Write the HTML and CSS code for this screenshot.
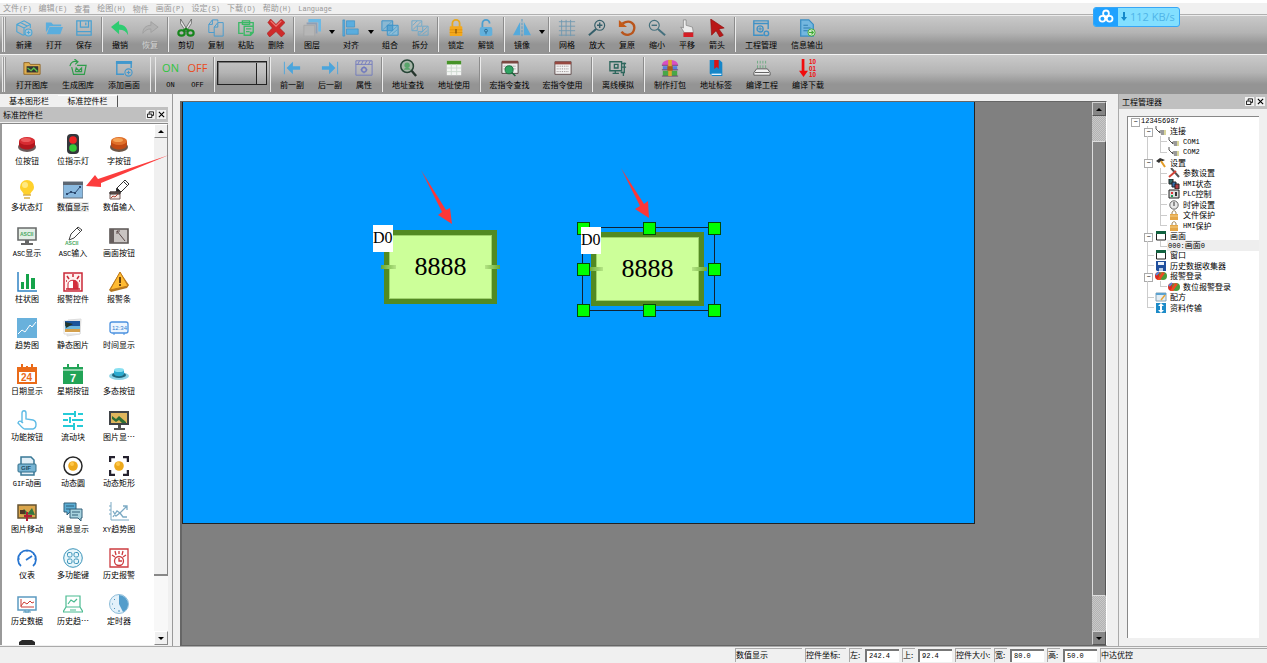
FILE: index.html
```html
<!DOCTYPE html>
<html lang="zh-CN">
<head>
<meta charset="utf-8">
<title>123456987</title>
<link rel="stylesheet" href="styles.css">
</head>
<body>
<nav class="menubar">
  <a href="#">文件<span class="latin">(F)</span></a><a href="#">编辑<span class="latin">(E)</span></a><a href="#">查看</a><a href="#">绘图<span class="latin">(H)</span></a><a href="#">物件</a><a href="#">画面<span class="latin">(P)</span></a><a href="#">设定<span class="latin">(S)</span></a><a href="#">下载<span class="latin">(D)</span></a><a href="#">帮助<span class="latin">(H)</span></a><a href="#"><span class="latin">Language</span></a>
</nav>

<div class="toolbar">
  <span class="grip"></span>
  <button class="tool"><svg viewBox="0 0 20 20" fill="none" stroke="#4aa6d6" stroke-width="1.2"><path d="M12 17l-3 1-7-4V6l8-4 7 4v4M2 6l8 4 7-4M10 10v8M6 4l8 4"/><circle cx="15" cy="15" r="3.800" fill="#a9c4d4"/><path d="M13 15h4M15 13v4"/></svg>新建</button>
  <button class="tool"><svg viewBox="0 0 20 20" fill="#5aaede"><path d="M1 4h6l2 2h9v2H5L2 14H1z"/><path d="M5 9h15l-3 8H2z"/></svg>打开</button>
  <button class="tool"><svg viewBox="0 0 20 20" fill="none" stroke="#4aa0d0" stroke-width="1.4"><path d="M2 2h16v16H2zM6 2v7h9V2M12 4v3M2 14h16"/></svg>保存</button>
  <span class="sep"></span>
  <button class="tool"><svg viewBox="0 0 20 20" fill="#2ecc71"><path d="M0 9l9-7v4c6 0 10 4 10 12-2-4-5-6-10-6v5z"/></svg>撤销</button>
  <button class="tool off" disabled><svg viewBox="0 0 20 20" fill="#b2b2b2" stroke="#9f9f9f"><path d="M19 9l-8-6v4C5 7 2 11 2 16c2-3 5-5 9-5v4z"/></svg>恢复</button>
  <span class="sep"></span>
  <button class="tool"><svg viewBox="0 0 20 20"><path d="M4 0l8 13-2 1L4 5zM16 0L8 13l2 1 6-9z" fill="#e4e4e4" stroke="#444" stroke-width=".7"/><g fill="none" stroke="#16851c" stroke-width="2.4"><ellipse cx="5" cy="15.500" rx="3.500" ry="3"/><ellipse cx="15" cy="15.500" rx="3.500" ry="3"/><path d="M7 13l3-2 3 2"/></g></svg>剪切</button>
  <button class="tool"><svg viewBox="0 0 20 20" fill="none" stroke="#4a9cce" stroke-width="1.1"><path d="M8 15H2V6l4-5h6v2M2 6h4V1"/><path d="M8 9l4-5h6v15H8zM8 9h4V4"/></svg>复制</button>
  <button class="tool"><svg viewBox="0 0 20 20" fill="none" stroke="#3cb866" stroke-width="1.5"><path d="M7 16H2V4h16v4M6 2h8v4H6zM8 8h10v7l-3 3H8zM10 11h6M10 14h4M15 18v-3h3"/></svg>粘贴</button>
  <button class="tool"><svg viewBox="0 0 20 20"><path d="M1 4l3-4 6 6 6-6 4 4-6 6 6 6-4 4-6-6-7 6-3-4 6-6z" fill="#cf2b2b" stroke="#a01818" stroke-width=".6"/><path d="M4 2l6 6 6-6" fill="none" stroke="#ee7b76" stroke-width="1.2"/></svg>删除</button>
  <span class="sep"></span>
  <button class="tool"><svg viewBox="0 0 20 20"><path d="M6 0h14v14h-3V4H6z" fill="#6db9e4"/><path d="M4 4h12v2H4zM14 6h2v10h-2z" fill="#8f9fb5"/><path d="M1 7h12v12H1z" fill="#b6b6b6" stroke="#a6a6a6"/></svg>图层</button><button class="drop" aria-label="图层选项"></button>
  <button class="tool"><svg viewBox="0 0 20 20" fill="#5badde" stroke="#3f91c4" stroke-width=".8"><path d="M1 1h2v18H1zM5 2h9v7H5zM5 11h13v6H5z"/></svg>对齐</button><button class="drop" aria-label="对齐选项"></button>
  <button class="tool"><svg viewBox="0 0 20 20" stroke="#3f94c8" stroke-width="1.1"><path d="M1 2h12v11H1z" fill="#8ab8d2"/><path d="M7 7h12v11H7z" fill="#8cbcd6"/><path d="M7 7h6v6H7z" fill="#5aa4d0"/><path d="M2 12L12 3M8 17L18 8M12 17l6-5" fill="none" stroke-width=".7"/></svg>组合</button>
  <button class="tool"><svg viewBox="0 0 20 20" stroke="#5fa6ce" stroke-width=".9" fill="none"><path d="M1 2h11v6H7v5H1zM13 8h6v10H8v-4h5zM2 7l5-5M2 12l9-9M9 17l9-8M13 17l5-4"/></svg>拆分</button>
  <span class="sep"></span>
  <button class="tool"><svg viewBox="0 0 20 20"><path d="M6 9V5a4 4 0 018 0v4" fill="none" stroke="#e8a81c" stroke-width="2"/><rect x="3" y="8" width="14" height="11" rx="1" fill="#f3a81b"/><path d="M3 12h14M3 15h14" stroke="#e0920c"/><path d="M10 11v5" stroke="#855306" stroke-width="1.500"/></svg>锁定</button>
  <button class="tool"><svg viewBox="0 0 20 20"><path d="M6 9V5a4 4 0 018 0" fill="none" stroke="#4b9fd0" stroke-width="2"/><rect x="3" y="9" width="14" height="10" rx="2" fill="#62b0dc"/><circle cx="10" cy="13" r="1.600" fill="none" stroke="#29688e"/><path d="M10 14v3" stroke="#29688e"/></svg>解锁</button>
  <span class="sep"></span>
  <button class="tool"><svg viewBox="0 0 20 20" fill="#54aadc"><path d="M8 3v15H0zM12 3v15h8z"/><path d="M10 0v20" stroke="#4694c4" stroke-dasharray="3 1"/></svg>镜像</button><button class="drop" aria-label="镜像选项"></button>
  <span class="sep"></span>
  <button class="tool"><svg viewBox="0 0 20 20" fill="none" stroke="#7099b0"><path d="M1 3h18M1 8h18M1 13h18M1 18h18M4 1v18M9 1v18M14 1v18"/></svg>网格</button>
  <button class="tool"><svg viewBox="0 0 20 20" fill="none" stroke="#355f6a"><circle cx="13" cy="7" r="5.500" stroke-width="1.300"/><path d="M10 7h6M13 4v6" stroke-width="1.600"/><path d="M9 11l-8 7" stroke-width="2.200"/></svg>放大</button>
  <button class="tool"><svg viewBox="0 0 20 20"><path d="M5 5c8-5 14 0 13 6-1 7-10 9-14 3" fill="none" stroke="#b9551c" stroke-width="2.600"/><path d="M1 1v8h9z" fill="#c45a18"/></svg>复原</button>
  <button class="tool"><svg viewBox="0 0 20 20" fill="none" stroke="#45707d"><circle cx="7" cy="7" r="5.500" stroke-width="1.300"/><path d="M4 7h6" stroke-width="1.600"/><path d="M11 11l8 7" stroke-width="2.200"/></svg>缩小</button>
  <button class="tool"><svg viewBox="0 0 20 20"><path d="M6 1h3v6l7 2 1 6H7L3 9l3 1z" fill="#ececec" stroke="#777" stroke-width=".7"/><path d="M6 15h11v5H6z" fill="#d51e26"/></svg>平移</button>
  <button class="tool"><svg viewBox="0 0 20 20"><path d="M3 0l15 10-6 1 5 7-4 2-4-7-5 5z" fill="#b91818" stroke="#8d0d0d" stroke-width=".7"/></svg>箭头</button>
  <span class="sep"></span>
  <button class="tool wide"><svg viewBox="0 0 20 20" fill="none" stroke="#3e91c6" stroke-width="1.500"><path d="M13 18H2V2h16v9M2 5h16"/><circle cx="9" cy="11" r="3.400"/><path d="M9 9v4M7 11h4" stroke-width="1"/><circle cx="16" cy="16" r="2.500"/></svg>工程管理</button>
  <button class="tool wide"><svg viewBox="0 0 20 20"><path d="M3 1h9l5 5v13H3z" fill="#73b7df" stroke="#398dc3" stroke-width="1.400"/><path d="M6 7h5M6 10h8M6 13h5" stroke="#2f7fb2" stroke-width="1.200"/><circle cx="15" cy="15" r="4" fill="#cfe8c5" stroke="#3faa34"/><path d="M12 15h5M15 13l2 2-2 2" fill="none" stroke="#3faa34" stroke-width="1.200"/></svg>信息输出</button>
</div>

<div class="toolbar">
  <span class="grip"></span>
  <button class="tool wide"><svg viewBox="0 0 20 20"><path d="M1 4h6l1 2h11v11H1z" fill="#e0b052" stroke="#8d6424"/><path d="M4 8h13v7H4z" fill="#333"/><path d="M5 10l4 3 3-3 4 4" fill="none" stroke="#5ec64b" stroke-width="1.500"/></svg>打开图库</button>
  <button class="tool wide"><svg viewBox="0 0 20 20" fill="none" stroke="#2f9d4b" stroke-width="1.300"><path d="M9 7h10l-2 10H5L3 9M1 8c1-5 4-6 8-5M6 0l4 3-3 3M7 14l1-4 3 3 3-3v4H7"/></svg>生成图库</button>
  <button class="tool wide"><svg viewBox="0 0 20 20" fill="none" stroke="#4298cd" stroke-width="1.600"><path d="M10 17H2V3h16v7"/><path d="M1 4h18" stroke-width="3"/><circle cx="15" cy="15" r="4" stroke-width="1.200"/><path d="M13 15h4M15 13v4" stroke-width="1.200"/></svg>添加画面</button>
  <span class="grip double"></span>
  <button class="tool power"><b class="on">ON</b><span class="latin">ON</span></button>
  <button class="tool power"><b class="offtext">OFF</b><span class="latin">OFF</span></button>
  <span class="sep"></span>
  <select class="state" aria-label="状态"><option></option></select>
  <span class="sep"></span>
  <button class="tool mid"><svg viewBox="0 0 20 20" fill="#4ba5dc"><path d="M1 3h1v14H1zM4 10l7-7v5h8v4h-8v5z"/></svg>前一副</button>
  <button class="tool mid"><svg viewBox="0 0 20 20" fill="#4ba5dc"><path d="M18 3h1v14h-1zM16 10L9 3v5H1v4h8v5z"/></svg>后一副</button>
  <button class="tool"><svg viewBox="0 0 20 20" fill="none" stroke="#7079bd"><path d="M1 2h18v16H1zM1 6h18M5 2L3 6M9 2L7 6M13 2l-2 4M17 2l-2 4"/><circle cx="10" cy="12" r="2.600" stroke-width="1.500"/><path d="M10 8v2M10 14v2M6 12h2M12 12h2"/></svg>属性</button>
  <span class="sep"></span>
  <button class="tool wide"><svg viewBox="0 0 20 20"><circle cx="9" cy="8" r="7" fill="#a7b6a9" stroke="#264536" stroke-width="1.700"/><circle cx="9" cy="7" r="3" fill="#58a46a"/><path d="M5 12c1-3 7-3 8 0" fill="#58a46a"/><path d="M14 13l5 6" stroke="#26352d" stroke-width="2.600"/></svg>地址查找</button>
  <button class="tool wide"><svg viewBox="0 0 20 20"><path d="M2 2h16v16H2z" fill="#f3f5f3"/><path d="M2 2h16v4H2z" fill="#459327"/><path d="M2 10h16M2 14h16M7 6v12M13 6v12" stroke="#ccd8ce"/></svg>地址使用</button>
  <span class="sep"></span>
  <button class="tool macro"><svg viewBox="0 0 20 20"><path d="M1 3h18v13H1z" fill="#eee" stroke="#4e4141"/><path d="M1 2h18v3H1z" fill="#7b4741"/><path d="M3 8h14M3 11h14" stroke="#756b6b" stroke-dasharray="1 1"/><circle cx="9" cy="12" r="4.500" fill="#2ea463" stroke="#176b3b"/><path d="M12 15l4 4" stroke="#17653a" stroke-width="1.600"/></svg>宏指令查找</button>
  <button class="tool macro"><svg viewBox="0 0 20 20"><path d="M1 3h18v14H1z" fill="#f4f4f4" stroke="#5b4646"/><path d="M1 3h18v3H1z" fill="#974840"/><path d="M3 8h14M3 11h14M3 14h14" stroke="#847b7b" stroke-dasharray="1 1"/></svg>宏指令使用</button>
  <span class="sep"></span>
  <button class="tool wide"><svg viewBox="0 0 20 20" fill="none" stroke="#2d665c" stroke-width="1.500"><path d="M1 3h13v10H1zM7 13v3M4 16h7M6 6h4v4H6zM14 5h5M14 9h5M17 4v11h-4M16 15v4"/></svg>离线模拟</button>
  <span class="sep"></span>
  <button class="tool wide"><svg viewBox="0 0 20 20"><path d="M1 7c0-8 18-8 18 0z" fill="#d94fc0"/><path d="M2 8h16v4H2z" fill="#547fe0"/><path d="M2 13h16v6H2z" fill="#48a747"/><path d="M1 7h18M1 12h18M1 19h18" stroke="#6e4570"/><path d="M8 1h4v18H8z" fill="#dba82c"/><path d="M7 8h6v5H7z" fill="#a85d16"/></svg>制作打包</button>
  <button class="tool wide"><svg viewBox="0 0 20 20"><path d="M3 1h11l3 3v15H6l-3-3z" fill="#1686c8"/><path d="M5 17h11" stroke="#e4f3ff" stroke-width="1.500"/><path d="M8 1h5v10l-2-2-3 2z" fill="#d81515"/></svg>地址标签</button>
  <button class="tool wide"><svg viewBox="0 0 20 20"><path d="M5 2v3M8 2v3M11 2v3M14 2v3M5 7v3M8 7v3M11 7v3M14 7v3" stroke="#6aaa7f"/><path d="M4 11h12l3 4v3H1v-3z" fill="#f3f3f3" stroke="#555"/><path d="M2 15h16" stroke="#555"/></svg>编译工程</button>
  <button class="tool wide"><svg viewBox="0 0 20 20" fill="#f00c0c"><path d="M3 0h3v13h4l-5 7-5-7h3z"/><text x="11" y="6" class="bits">10</text><text x="11" y="13" class="bits">01</text><text x="11" y="20" class="bits">10</text></svg>编译下载</button>
</div>

<main class="workspace">
  <aside class="dock">
    <div class="tabs"><button class="tab">基本图形栏</button><button class="tab active">标准控件栏</button></div>
    <div class="dockhead"><h2>标准控件栏</h2><button aria-label="浮动"><svg viewBox="0 0 8 8"><path d="M2.500 3V1h5v4h-2M.500 3.500h5v4h-5z" fill="none" stroke="#000"/></svg></button><button aria-label="关闭"><svg viewBox="0 0 8 8"><path d="M1 1l6 6M7 1L1 7" stroke="#000" stroke-width="1.300"/></svg></button></div>
    <div class="palette">
      <ul class="widgets">
        <li><svg viewBox="0 0 20 20"><ellipse cx="10" cy="13" rx="9" ry="5" fill="#6a5a5a"/><path d="M2 7v4c1 6 15 6 16 0V7z" fill="#b3161d"/><ellipse cx="10" cy="7" rx="8" ry="4" fill="#d82c32"/><ellipse cx="9" cy="6" rx="5" ry="2" fill="#ec5a5c"/></svg>位按钮</li>
        <li><svg viewBox="0 0 20 20"><rect x="4" y="0" width="12" height="20" rx="4" fill="#34373c"/><circle cx="10" cy="6" r="3.800" fill="#ef2424"/><circle cx="10" cy="14" r="3.800" fill="#35c737"/></svg>位指示灯</li>
        <li><svg viewBox="0 0 20 20"><ellipse cx="10" cy="13" rx="9" ry="5" fill="#6d5646"/><path d="M2 7v4c1 6 15 6 16 0V7z" fill="#c14a13"/><ellipse cx="10" cy="7" rx="8" ry="4" fill="#e0702a"/><ellipse cx="9" cy="6" rx="5" ry="2" fill="#f5a356"/></svg>字按钮</li>
        <li><svg viewBox="0 0 20 20"><path d="M3 7a7 7 0 0114 0c0 4-3 4-4 8H7C6 11 3 11 3 7z" fill="#ffd12c"/><circle cx="8" cy="5" r="3" fill="#ffe982"/><path d="M6 15h8M7 18h6" stroke="#d9b04c" stroke-width="1.600"/></svg>多状态灯</li>
        <li class="picked"><svg viewBox="0 0 20 20"><path d="M0 2h20v16H0z" fill="#8ab9df" stroke="#66717c"/><path d="M0 2h20v3H0z" fill="#5d6773"/><path d="M4 14l4-2 4 1 5-6" fill="none" stroke="#2c4970"/><path d="M3 13h2v2H3zM7 11h2v2H7zM11 12h2v2h-2zM16 6h2v2h-2z" fill="#2c4970"/></svg><span>数值显示</span></li>
        <li><svg viewBox="0 0 20 20" fill="none" stroke="#333"><path d="M7 13l1-5 8-8 4 4-8 8zM15 2l3 3"/><path d="M7 13l1-5 4 4z" fill="#222"/><path d="M1 12h10v7H1z" fill="#f4e9e5" stroke="#765d58"/><path d="M1 12h10v2H1z" fill="#765d58"/><path d="M2 18l2-2 2 1 3-3" stroke="#b34838"/></svg>数值输入</li>
        <li><svg viewBox="0 0 20 20"><path d="M1 2h18v12H1z" fill="#e4eee6" stroke="#686b6b" stroke-width="1.600"/><path d="M8 14h4v3H8zM4 17h12v2H4z" fill="#666"/><text x="3" y="10" class="ascii">ASCII</text></svg><span><span class="latin">ASC</span>显示</span></li>
        <li><svg viewBox="0 0 20 20"><path d="M6 14l2-6 7-7 4 3-8 8zM14 2l3 3" fill="none" stroke="#444"/><text x="2" y="19" class="ascii">ASCII</text></svg><span><span class="latin">ASC</span>输入</span></li>
        <li><svg viewBox="0 0 20 20"><path d="M1 3h18v14H1z" fill="#c9c4c2" stroke="#5b5554" stroke-width="1.600"/><path d="M1 3h4v14H1z" fill="#665e5d"/><path d="M8 5l8 10M8 5v3M8 5h3" stroke="#5a4949" fill="none"/></svg>画面按钮</li>
        <li><svg viewBox="0 0 20 20"><path d="M1 0v19h19" fill="none" stroke="#3182c4" stroke-width="1.500"/><path d="M4 10h3v7H4zM9 2h3v15H9zM14 6h4v11h-4z" fill="#15a34a"/></svg>柱状图</li>
        <li><svg viewBox="0 0 20 20"><path d="M1 1h18v18H1z" fill="#fff1ef" stroke="#ca2838" stroke-width="1.500"/><path d="M5 17v-5c0-5 10-5 10 0v5z" fill="#fff" stroke="#ca2838"/><path d="M10 8c4 0 5 2 5 9h-5z" fill="#d32e3c"/><path d="M10 2v3M4 4l2 3M16 4l-2 3M3 9h1M16 9h1M3 17h14" stroke="#ca2838" stroke-width="1.500"/></svg>报警控件</li>
        <li><svg viewBox="0 0 20 20"><path d="M11 0l9 13-2 3-16 4-2-2z" fill="#b5771f"/><path d="M11 0l8 14-18 4z" fill="#ffbb32" stroke="#c17a1a"/><path d="M11 5v6M11 12v2" stroke="#54300b" stroke-width="1.700"/></svg>报警条</li>
        <li><svg viewBox="0 0 20 20"><path d="M0 0h20v20H0z" fill="#69b1dc"/><path d="M1 16l4-4 3 2 5-7 2 2 4-5" fill="none" stroke="#fff"/></svg>趋势图</li>
        <li><svg viewBox="0 0 20 20"><path d="M5 2l13-1-1 15-13 2z" fill="#eee" stroke="#ddd"/><path d="M1 3h16v13H1z" fill="#fff" stroke="#ddd"/><path d="M2 3h15v5H2z" fill="#1c549b"/><path d="M2 8h15v3H2z" fill="#6db6dc"/><path d="M2 11h15v3H2z" fill="#d4a04c"/><path d="M2 4l8 2-7 4z" fill="#243529"/></svg>静态图片</li>
        <li><svg viewBox="0 0 20 20"><rect x="1" y="4" width="18" height="11" rx="2" fill="#edf6ff" stroke="#4b91df" stroke-width="1.300"/><text x="3" y="12" class="clock">12:34</text><path d="M4 16h2M14 16h2" stroke="#4b91df"/></svg>时间显示</li>
        <li><svg viewBox="0 0 20 20"><path d="M1 4h18v15H1z" fill="#fff" stroke="#ea6b19" stroke-width="2"/><path d="M1 4h18v4H1z" fill="#ea6b19"/><path d="M5 0v5M15 0v5M10 2v4" stroke="#ea6b19" stroke-width="2"/><text x="4" y="17" class="date">24</text></svg>日期显示</li>
        <li><svg viewBox="0 0 20 20"><path d="M0 3h20v17H0z" fill="#22a457"/><path d="M5 0v5M15 0v5" stroke="#22a457" stroke-width="2"/><path d="M0 6h20" stroke="#fff"/><text x="7" y="18" class="week">7</text></svg>星期按钮</li>
        <li><svg viewBox="0 0 20 20"><ellipse cx="10" cy="12" rx="10" ry="4" fill="#8fd3e6"/><ellipse cx="10" cy="11" rx="7" ry="3" fill="#20677d"/><path d="M5 6v4c1 3 9 3 10 0V6z" fill="#2cabd0"/><ellipse cx="10" cy="6" rx="5" ry="2" fill="#88e0f1"/></svg>多态按钮</li>
        <li><svg viewBox="0 0 20 20" fill="none" stroke="#5ebbe5" stroke-width="1.400"><path d="M5 13V3c0-3 4-3 4 0v6l7 1c4 1 4 8 0 9H8c-2 0-4-3-7-6 1-3 3-2 5 0"/></svg>功能按钮</li>
        <li><svg viewBox="0 0 20 20" fill="none" stroke="#26cbd7" stroke-width="2"><path d="M0 4h11M15 4h5M12 1v6M0 10h5M9 10h11M7 7v6M0 16h10M14 16h6M11 13v7"/></svg>流动块</li>
        <li><svg viewBox="0 0 20 20"><path d="M1 2h18v12H1z" fill="#dfb65d" stroke="#404448" stroke-width="2"/><path d="M3 6l4 3 3-3 7 6v1h-4l-3-3-3 2-4-3z" fill="#2e6e35"/><path d="M9 15h3v3H9zM5 18h11v2H5z" fill="#555"/></svg>图片显…</li>
        <li><svg viewBox="0 0 20 20"><path d="M4 8V1h10l3 3v4M4 14v5h13v-5" fill="#e2eff7" stroke="#397896" stroke-width="1.500"/><rect x="1" y="8" width="18" height="8" rx="1" fill="#77b4d3" stroke="#336e8b"/><text x="4" y="14" class="gif">GIF</text></svg><span><span class="latin">GIF</span>动画</span></li>
        <li><svg viewBox="0 0 20 20"><circle cx="10" cy="10" r="9" fill="#fff" stroke="#292929" stroke-width="1.500"/><circle cx="10" cy="10" r="4.800" fill="#eda91c"/><circle cx="9" cy="8" r="2" fill="#ffc84a"/></svg>动态圆</li>
        <li><svg viewBox="0 0 20 20"><path d="M1 6V1h5M14 1h5v5M19 14v5h-5M6 19H1v-5" fill="none" stroke="#24212e" stroke-width="2.500"/><circle cx="10" cy="10" r="4.800" fill="#eda91c"/><circle cx="9" cy="8" r="2" fill="#ffc84a"/></svg>动态矩形</li>
        <li><svg viewBox="0 0 20 20"><path d="M1 3h18v13H1z" fill="#dba64b" stroke="#665331" stroke-width="1.500"/><path d="M3 12l4-5 4 4 4-5 3 7z" fill="#337640"/><path d="M10 10v9M7 14h8" stroke="#b51d35" stroke-width="2"/><path d="M3 8h5v4H3z" fill="#503722"/></svg>图片移动</li>
        <li><svg viewBox="0 0 20 20" stroke="#315f79"><path d="M1 1h12v9H7l-3 3v-3H1z" fill="#5caed5"/><path d="M7 7h12v9h-1v3l-3-3H7z" fill="#a8d3df"/><path d="M3 4h8M3 7h4M9 10h8M9 13h6"/></svg>消息显示</li>
        <li><svg viewBox="0 0 20 20" fill="none" stroke="#7caac4"><path d="M2 0v18h18M0 4h2M0 8h2M0 12h2"/><path d="M4 15l4-6 3 2 7-7M14 4h4v4M4 9l3 5 4-3 3 4h4" stroke-width="1.300"/></svg><span><span class="latin">XY</span>趋势图</span></li>
        <li><svg viewBox="0 0 20 20" fill="none" stroke="#2775d0" stroke-width="1.700"><path d="M4 18a9 9 0 1112 0M9 12l6-4"/><path d="M10 2v2M3 6l1 1M17 6l-1 1M1 11h2M17 11h2" stroke-width="1"/></svg>仪表</li>
        <li><svg viewBox="0 0 20 20" fill="#e7f6fb" stroke="#3c94b9"><circle cx="10" cy="10" r="9.300"/><rect x="4.500" y="4.500" width="4.500" height="4.500" rx="1.500"/><rect x="11" y="4.500" width="4.500" height="4.500" rx="1.500"/><rect x="4.500" y="11" width="4.500" height="4.500" rx="1.500"/><rect x="11" y="11" width="4.500" height="4.500" rx="1.500"/></svg>多功能键</li>
        <li><svg viewBox="0 0 20 20" fill="none" stroke="#cd3c40" stroke-width="1.300"><path d="M1 1h18v18H1z"/><circle cx="10" cy="13" r="4.500"/><path d="M10 10v3h3M10 3v3M6 3l1 4M14 3l-1 4M3 7l3 2M17 7l-3 2"/></svg>历史报警</li>
        <li><svg viewBox="0 0 20 20"><path d="M1 3h18v13H1z" fill="#fff" stroke="#5c9bc1" stroke-width="1.500"/><path d="M4 5v8h13M4 12l3-4 3 2 3-3 2 2 2-1" fill="none" stroke="#cb3d36"/><path d="M8 16v2h4v-2M6 18h8" stroke="#599bbd" fill="none"/></svg>历史数据</li>
        <li><svg viewBox="0 0 20 20" fill="none" stroke="#4bbb91" stroke-width="1.200"><path d="M3 2h14v11H3zM3 13l-3 5h20l-3-5M5 10l3-4 3 2 3-3M7 16h6"/></svg>历史趋…</li>
        <li><svg viewBox="0 0 20 20"><circle cx="10" cy="10" r="9.500" fill="#e2f1fa" stroke="#8dbcd9"/><path d="M10 10V1a9 9 0 019 9c0 5-3 7-5 8z" fill="#539dcb"/><path d="M3 10h1M10 18v-2M5 5l1 1M5 15l1-1" stroke="#4f93ba"/></svg>定时器</li>
        <li><svg viewBox="0 0 20 20"><path d="M2 4V2l3-2h10l3 2v18H2z" fill="#292929"/></svg></li>
      </ul>
      <div class="scroll light"><button class="up" aria-label="向上"></button><div class="thumb"></div><div class="track"></div><button class="down" aria-label="向下"></button></div>
      <svg class="pointer" viewBox="0 0 83 33"><path d="M0 31L9 20L12 24L83 0L15 28L15 32Z" fill="#fc3d3d"/></svg>
    </div>
  </aside>

  <section class="stage">
    <div class="screen">
      <svg class="arrow first" viewBox="0 0 31 55"><path d="M0 0L25 40L29 38L31 54L17 45L21 42Z" fill="#fc3737"/></svg>
      <svg class="arrow second" viewBox="0 0 31 55"><path d="M0 0L23 36L27 33L28 50L14 41L19 38Z" fill="#fc3737"/></svg>
      <div class="display one"><i></i><span>8888</span><i></i></div><b class="tag tagone">D0</b>
      <div class="display two"><i></i><span>8888</span><i></i></div>
      <div class="selection"><i></i><i></i><i></i><i></i><i></i><i></i><i></i><i></i></div><b class="tag tagtwo">D0</b>
    </div>
    <div class="scroll dark"><button class="up" aria-label="向上"></button><div class="track"></div><div class="thumb"></div><div class="track low"></div><button class="down" aria-label="向下"></button></div>
  </section>

  <aside class="project">
    <div class="dockhead"><h2>工程管理器</h2><button aria-label="浮动"><svg viewBox="0 0 8 8"><path d="M2.500 3V1h5v4h-2M.500 3.500h5v4h-5z" fill="none" stroke="#000"/></svg></button><button aria-label="关闭"><svg viewBox="0 0 8 8"><path d="M1 1l6 6M7 1L1 7" stroke="#000" stroke-width="1.300"/></svg></button></div>
    <svg class="defs" aria-hidden="true">
      <symbol id="plug" viewBox="0 0 12 10"><path d="M1 0v3l4 4M4 5l4 3" fill="none" stroke="#555"/><path d="M5 4h4v5H6z" fill="#999"/><path d="M9 4h2v5H9z" fill="#d9d69a"/></symbol>
      <symbol id="lock" viewBox="0 0 12 10"><path d="M4 5V3c0-3 4-3 4 0v2" fill="none" stroke="#9b8558"/><path d="M2 4h8v6H2z" fill="#e4a646"/><path d="M2 6h8" stroke="#f4cf87"/></symbol>
      <symbol id="win" viewBox="0 0 12 10"><path d="M1.500 1h9v8h-9z" fill="#fff" stroke="#222"/><path d="M1 0h10v3H1z" fill="#126341"/></symbol>
      <symbol id="alarm" viewBox="0 0 12 10"><ellipse cx="4" cy="5" rx="4" ry="4" fill="#d92b22"/><ellipse cx="8" cy="5" rx="4" ry="4" fill="#4a9c3a"/><path d="M2 9l5-8 3 1-5 7z" fill="#ed4b22"/><path d="M1 4l3-3" stroke="#548dde" stroke-width="2"/></symbol>
    </svg>
    <ul class="tree">
      <li><i class="box"></i><span class="latin">123456987</span></li>
      <li><i></i><i class="box v"></i><svg><use href="#plug"/></svg>连接</li>
      <li><i></i><i class="v"></i><i class="v h"></i><svg><use href="#plug"/></svg><span class="latin">COM1</span></li>
      <li><i></i><i class="v"></i><i class="v h end"></i><svg><use href="#plug"/></svg><span class="latin">COM2</span></li>
      <li><i></i><i class="box v"></i><svg viewBox="0 0 12 10"><path d="M1 3l4-3 5 2-2 1-2 0-2 2z" fill="#333"/><path d="M6 3l4 6" stroke="#e39c26" stroke-width="2"/></svg>设置</li>
      <li><i></i><i class="v"></i><i class="v h"></i><svg viewBox="0 0 12 10"><path d="M3 0l8 9" stroke="#555" stroke-width="2"/><path d="M8 3L1 9" stroke="#d34437" stroke-width="2"/></svg>参数设置</li>
      <li><i></i><i class="v"></i><i class="v h"></i><svg viewBox="0 0 12 10"><path d="M1 0h4v5H1z" fill="#316b68" stroke="#222"/><path d="M4 3h4v5H4z" fill="#346fac" stroke="#222"/><path d="M7 5h4v5H7z" fill="#b23e43" stroke="#222"/></svg><span class="latin">HMI</span>状态</li>
      <li><i></i><i class="v"></i><i class="v h"></i><svg viewBox="0 0 12 10"><path d="M1 1h10v8H1z" fill="#ddd" stroke="#222"/><path d="M3 3h2v2H3z" fill="#d33"/><path d="M3 6h2v2H3z" fill="#295"/><path d="M7 3h2v4H7z" fill="#333"/></svg><span class="latin">PLC</span>控制</li>
      <li><i></i><i class="v"></i><i class="v h"></i><svg viewBox="0 0 12 10"><circle cx="6" cy="5" r="4.200" fill="#e7e7e7" stroke="#666"/><path d="M6 2v4" fill="none" stroke="#333"/></svg>时钟设置</li>
      <li><i></i><i class="v"></i><i class="v h"></i><svg><use href="#lock"/></svg>文件保护</li>
      <li><i></i><i class="v"></i><i class="v h end"></i><svg><use href="#lock"/></svg><span class="latin">HMI</span>保护</li>
      <li><i></i><i class="box v"></i><svg><use href="#win"/></svg>画面</li>
      <li><i></i><i class="v"></i><i class="v h end"></i><span class="current"><span class="latin">000:</span>画面<span class="latin">0</span></span></li>
      <li><i></i><i class="v h"></i><svg><use href="#win"/></svg>窗口</li>
      <li><i></i><i class="v h"></i><svg viewBox="0 0 12 10"><path d="M1 0h10v10H2l-1-1z" fill="#204f9d"/><path d="M3 1h6v3H3z" fill="#e9f0fa"/><path d="M4 7h4v3H4z" fill="#b9cbe4"/></svg>历史数据收集器</li>
      <li><i></i><i class="box v"></i><svg><use href="#alarm"/></svg>报警登录</li>
      <li><i></i><i class="v"></i><i class="v h end"></i><svg><use href="#alarm"/></svg>数位报警登录</li>
      <li><i></i><i class="v h"></i><svg viewBox="0 0 12 10"><path d="M1 1h10v8H1z" fill="#e3edf4" stroke="#83a2b4"/><path d="M1 1h10v2H1z" fill="#5aa2d1"/><path d="M6 8l4-5" stroke="#e5a438" stroke-width="1.500"/></svg>配方</li>
      <li><i></i><i class="v h end"></i><svg viewBox="0 0 12 10"><path d="M1 0h10v10H1z" fill="#1d8bc8"/><path d="M6 0l3 3H3zM6 10L3 7h6zM5 2h2v6H5z" fill="#fff"/></svg>资料传输</li>
    </ul>
  </aside>
</main>

<footer class="status">
  <span class="panel name">数值显示</span>
  <span class="panel caption">控件坐标:</span>
  <label for="px" class="panel">左:</label><input id="px" value="242.4">
  <label for="py" class="panel">上:</label><input id="py" value="92.4">
  <span class="panel size">控件大小:</span>
  <label for="pw" class="panel">宽:</label><input id="pw" value="80.0">
  <label for="ph" class="panel">高:</label><input id="ph" value="50.0">
  <span class="panel brand">中达优控</span>
</footer>

<div class="speed"><svg viewBox="0 0 24 20" fill="none" stroke="#fff" stroke-width="2"><circle cx="12" cy="6" r="3.200"/><circle cx="8" cy="12" r="3.200"/><circle cx="16" cy="12" r="3.200"/></svg><span><svg viewBox="0 0 6 10"><path d="M2 0h2v5h2L3 9 0 5h2z" fill="#1689c9"/></svg>112 KB/s</span></div>
</body>
</html>
```
FILE: styles.css
```css
* { box-sizing: border-box; }
body {
  margin: 0;
  height: 100vh;
  overflow: hidden;
  display: flex;
  flex-direction: column;
  background: #f0f0f0;
  color: #000;
  font: 8px/10px "Noto Sans CJK SC", sans-serif;
}
button, input, select { font: inherit; color: inherit; margin: 0; padding: 0; border: 0; background: none; border-radius: 0; }
ul { margin: 0; padding: 0; list-style: none; }
svg { display: block; flex: none; }
.latin { font: 7px/10px "Liberation Mono", monospace; }

.menubar { flex: none; height: 14px; padding: 0 3px; border-top: 3px solid #fff; display: flex; gap: 7px; align-items: center; }
.menubar a { color: #979797; text-decoration: none; white-space: nowrap; }

.toolbar {
  flex: none;
  height: 40px;
  display: flex;
  border-top: 1px solid #f4f4f4;
  background: linear-gradient(#cacaca, #b4b4b4 45%, #949494 75%, #949494);
}
.toolbar:first-of-type { border-top: 1px solid #b0b0b0; box-shadow: inset 0 1px #ececec; }
.grip { width: 9px; margin: 2px 0; background: linear-gradient(90deg, transparent 2px, #e8e8e8 2px 3px, #999 3px 4px, #e8e8e8 4px 5px, #999 5px 6px, transparent 6px); }
.grip.double { width: 10px; background: linear-gradient(90deg, transparent 3px, #e8e8e8 3px 4px, transparent 4px 8px, #e8e8e8 8px 9px, transparent 9px); }
.sep { width: 2px; margin: 2px; background: linear-gradient(90deg, #8c8c8c 1px, #ececec 1px); }
.tool { width: 30px; display: flex; flex-direction: column; align-items: center; gap: 3px; padding-top: 4px; white-space: nowrap; }
.tool svg { width: 18px; height: 18px; }
.tool.off { color: #d2d2d2; text-shadow: 1px 1px #8a8a8a; }
.tool.wide { width: 46px; }
.tool.mid { width: 38px; }
.tool.macro { width: 53px; }
.tool.power { width: 27px; }
.tool b { font: 500 11px/18px "Open Sans", "Noto Sans", sans-serif; }
.tool .on { color: #2fc540; }
.tool .offtext { color: #ea4a1c; }
.bits { font: bold 7px "Liberation Sans", sans-serif; }
.drop { width: 9px; display: flex; align-items: center; justify-content: center; padding-bottom: 5px; }
.drop::before { content: ""; border: 3px solid transparent; border-top: 4px solid #000; border-bottom: 0; }
.state { appearance: none; width: 50px; height: 24px; margin-top: 6px; border: 1px solid #222; background: linear-gradient(90deg, transparent 38px, #222 38px 39px, #ffffff22 39px); box-shadow: inset 1px 1px #777; }

.workspace { flex: 1; min-height: 0; display: flex; }
.dock { width: 173px; display: flex; flex-direction: column; border-right: 1px solid #999; padding-right: 4px; }
.tabs { height: 13px; display: flex; align-items: center; }
.tab { width: 58px; height: 12px; }
.tab.active { width: 60px; border-right: 1px solid #555; border-top: 1px solid #fff; }
.dockhead { flex: none; height: 15px; display: flex; align-items: center; gap: 2px; padding: 0 2px 0 3px; background: #c0c0c0; }
.dockhead h2 { flex: 1; margin: 0; font: inherit; }
.dockhead button { width: 9px; height: 9px; padding: 1px; background: #f2f2f2; }
.dockhead button svg { width: 7px; height: 7px; }
.palette { flex: 1; min-height: 0; position: relative; display: flex; margin: 1px 0; border-top: 1px solid #888; border-left: 2px solid #999; background: #fff; }
.widgets { flex: 1; overflow: hidden; display: grid; grid-template-columns: repeat(3, 46px); grid-auto-rows: 46px; align-content: start; padding: 9px 0 0 2px; }
.widgets li { display: flex; flex-direction: column; align-items: center; gap: 2px; padding-top: 1px; white-space: nowrap; }
.widgets svg { width: 20px; height: 20px; }
.picked > span { background: #eee; }
.ascii { font: bold 5px "Liberation Sans", sans-serif; fill: #48a860; }
.clock { font: 6px "Liberation Sans", sans-serif; fill: #347ed0; }
.date { font: bold 10px "Liberation Sans", sans-serif; fill: #ea6b19; }
.week { font: bold 11px "Liberation Sans", sans-serif; fill: #fff; }
.gif { font: bold 6px "Liberation Sans", sans-serif; fill: #204b63; }
.pointer { position: absolute; left: 84px; top: 31px; width: 83px; height: 33px; }

.scroll { width: 14px; flex: none; display: flex; flex-direction: column; }
.scroll button { flex: none; height: 14px; display: flex; align-items: center; justify-content: center; border: 1px solid; }
.scroll button::before { content: ""; border: 3px solid transparent; border-top-width: 0; border-bottom-color: #000; }
.scroll .down::before { border-width: 3px 3px 0; border-top-color: #000; }
.light button { background: #f0f0f0; border-color: #fff #888 #888 #fff; }
.light .thumb { flex: 8; background: #f0f0f0; border-right: 1px solid #888; border-bottom: 2px solid #888; }
.light .track { flex: 1; background: #f8f8f8; }
.dark button { background: #858585; border-color: #d0d0d0 #555 #555 #d0d0d0; }
.dark .thumb { flex: 1; background: #858585; border: 1px solid #ddd; border-right-color: #555; }
.dark .track { height: 25px; background: repeating-conic-gradient(#b2b2b2 0 25%, #c8c8c8 0 50%) 0 0 / 2px 2px; }
.dark .low { height: 35px; }

.stage { flex: 1; min-width: 0; display: flex; justify-content: space-between; margin: 7px 11px 0 7px; background: #808080; border: 1px solid #666; border-left-width: 2px; border-right-color: #fff; }
.screen { position: relative; width: 793px; height: 422px; background: #09f; border: 1px solid #222; border-top: 0; }
.arrow { position: absolute; width: 31px; height: 55px; }
.first { left: 238px; top: 68px; }
.second { left: 438px; top: 66px; }
.display { position: absolute; width: 113px; height: 74px; border: 5px solid #528a22; background: #cf9; display: flex; align-items: center; justify-content: space-between; box-shadow: inset 0 0 0 1px #9fd36c; }
.display span { font: 26px/30px "Liberation Serif", serif; }
.display i { width: 15px; height: 4px; margin: 0 -8px; background: linear-gradient(90deg, #66a834, #b5e585); }
.display i:last-child { background: linear-gradient(270deg, #66a834, #b5e585); }
.one { left: 201px; top: 128px; }
.two { left: 408px; top: 130px; }
.tag { position: absolute; width: 20px; height: 27px; background: #fff; font: 16px/26px "Liberation Serif", serif; }
.tagone { left: 190px; top: 123px; }
.tagtwo { left: 398px; top: 125px; }
.selection { position: absolute; left: 399px; top: 125px; width: 133px; height: 84px; border: 1px solid #123; }
.selection i { position: absolute; width: 13px; height: 13px; margin: -6px; background: #0f0; border: 1px solid #064a06; }
.selection i:nth-child(-n+3) { top: 0; }
.selection i:nth-child(n+6) { top: 100%; }
.selection i:nth-child(4), .selection i:nth-child(5) { top: 50%; }
.selection i:nth-child(2), .selection i:nth-child(7) { left: 50%; }
.selection i:nth-child(1), .selection i:nth-child(4), .selection i:nth-child(6) { left: 0; }
.selection i:nth-child(3), .selection i:nth-child(5), .selection i:nth-child(8) { left: 100%; }

.project { width: 149px; display: flex; flex-direction: column; border-left: 1px solid #aaa; }
.defs { position: absolute; width: 0; height: 0; }
.tree { flex: 1; margin: 7px 8px 8px; border-left: 1px solid #888; box-shadow: inset 0 1px #888; background: #fff; white-space: nowrap; }
.tree li { display: flex; align-items: center; height: 11px; }
.tree li:nth-child(even), .tree li:first-child { height: 10px; }
.tree li:nth-child(13) { height: 9px; }
.tree i { flex: none; width: 13px; align-self: stretch; background-repeat: no-repeat; }
.tree .v { background-image: linear-gradient(#ccc, #ccc); background-size: 1px 100%; background-position: 6px 0; }
.tree .h { background-image: linear-gradient(#ccc, #ccc), linear-gradient(#ccc, #ccc); background-size: 1px 100%, 7px 1px; background-position: 6px 0, 6px 5px; }
.tree .h.end { background-size: 1px 5px, 7px 1px; }
.tree .box::before { content: "−"; display: block; width: 7px; height: 7px; margin: 2px 3px 0; border: 1px solid #aaa; background: #fff; font: 7px/5px "Liberation Sans", sans-serif; text-align: center; }
.tree svg { width: 12px; height: 10px; margin: 0 3px 0 1px; }
.current { flex: 1; background: #eee; line-height: 9px; padding-left: 1px; }

.status { flex: none; height: 17px; display: flex; align-items: center; justify-content: flex-end; gap: 3px; border-top: 1px solid #aaa; white-space: nowrap; }
.panel { height: 14px; width: 13px; line-height: 12px; border-left: 1px solid #aaa; border-top: 1px solid #aaa; }
.panel.name { width: 67px; }
.panel.caption { width: 41px; }
.panel.size { width: 36px; }
.panel.brand { width: 167px; }
.status input { width: 34px; height: 13px; padding-left: 2px; background: #fff; border-top: 2px solid #777; border-left: 2px solid #777; font: 7px/10px "Liberation Mono", monospace; }

.speed { position: absolute; right: 87px; top: 7px; width: 87px; height: 20px; display: flex; border: 1px solid #38a6f5; border-radius: 3px; background: #82dfff; overflow: hidden; font: 11px/18px "Open Sans", sans-serif; color: #4fb4e8; }
.speed > svg { width: 24px; height: 18px; background: #1fa1ff; }
.speed span { flex: 1; display: flex; align-items: center; gap: 3px; padding-left: 3px; white-space: nowrap; }
.speed span svg { width: 6px; height: 10px; margin: 0; }
```
